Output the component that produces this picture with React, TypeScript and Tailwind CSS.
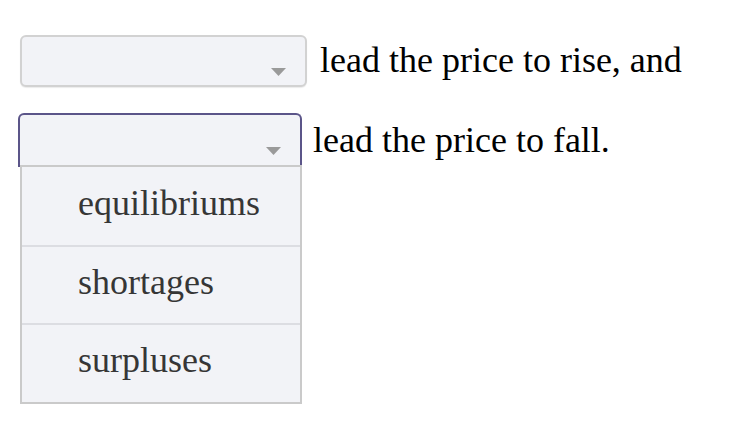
import React from "react";

function Arrow() {
  return (
    <svg width="15" height="8" viewBox="0 0 15 8" className="block">
      <polygon points="0,0 15,0 7.5,8" fill="#9a9a9a" />
    </svg>
  );
}

export default function App() {
  const serif = { fontFamily: '"Liberation Serif", "Times New Roman", serif' };
  return (
    <div className="w-[742px] h-[435px] bg-white relative" style={serif}>
      <div className="pl-[20px] pt-[35px] flex flex-col gap-[26px]">
        <div className="flex items-center">
          <div className="relative w-[287px] h-[52px] rounded-[6px] border-2 border-[#d2d2d2] bg-[#f2f3f7] shadow-[0_1px_1px_rgba(0,0,0,0.08)]">
            <div className="absolute right-[19px] top-[31px]">
              <Arrow />
            </div>
          </div>
          <span className="ml-[13px] text-[36px] leading-none text-black -mt-[2px]">
            lead the price to rise, and
          </span>
        </div>
        <div className="flex items-center -ml-[2px]">
          <div className="relative w-[284px] h-[54px]">
            <div className="h-full rounded-t-[6px] border-2 border-b-0 border-[#5b5589] bg-[#f2f3f7]" />
            <div className="absolute right-[21px] top-[34px]">
              <Arrow />
            </div>
            <div className="absolute left-[2px] top-[52px] w-[282px] bg-[#f2f3f7] border-2 border-[#cacaca] text-[36px] leading-none text-[#363636]">
              <div className="h-[78px] flex items-center pl-[56px] pb-[7px]">equilibriums</div>
              <div className="h-[78px] flex items-center pl-[56px] border-t-2 border-[#dcdde2] pb-[7px]">shortages</div>
              <div className="h-[79px] flex items-center pl-[56px] border-t-2 border-[#dcdde2] pb-[7px]">surpluses</div>
            </div>
          </div>
          <span className="ml-[11px] text-[36px] leading-none text-black -mt-[1px]">
            lead the price to fall.
          </span>
        </div>
      </div>
    </div>
  );
}
